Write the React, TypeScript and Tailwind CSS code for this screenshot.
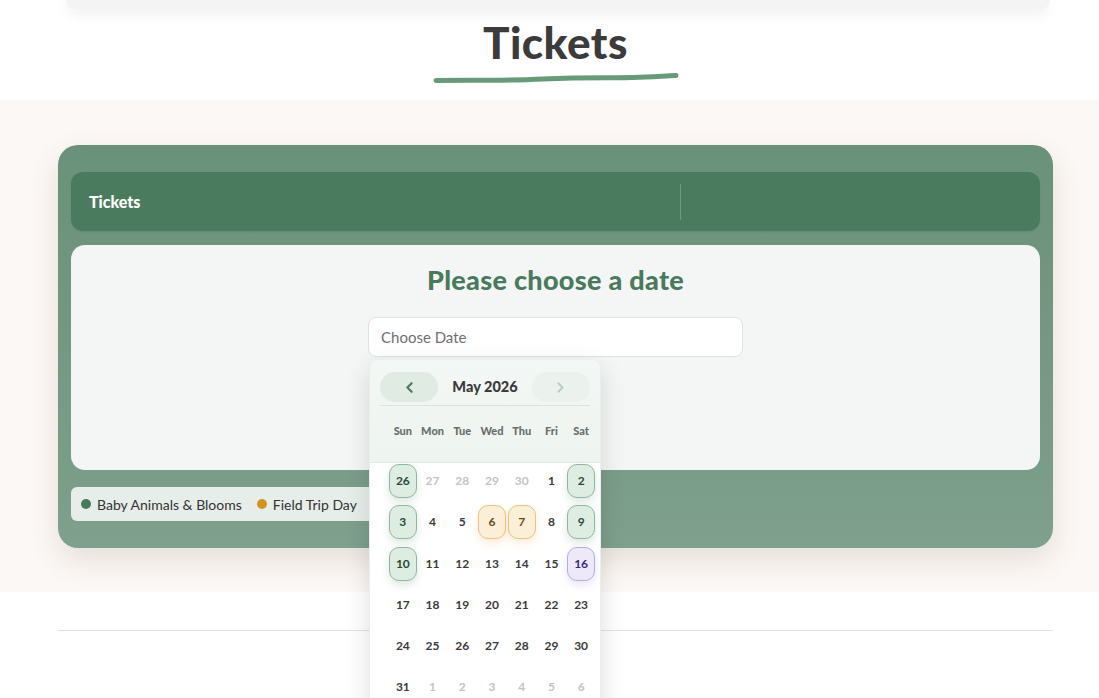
import React from "react";
import { ChevronLeft, ChevronRight } from "lucide-react";

type Cell = { d: number; muted?: boolean; kind?: "green" | "orange" | "purple" };

const rows: Cell[][] = [
  [{ d: 26, kind: "green" }, { d: 27, muted: true }, { d: 28, muted: true }, { d: 29, muted: true }, { d: 30, muted: true }, { d: 1 }, { d: 2, kind: "green" }],
  [{ d: 3, kind: "green" }, { d: 4 }, { d: 5 }, { d: 6, kind: "orange" }, { d: 7, kind: "orange" }, { d: 8 }, { d: 9, kind: "green" }],
  [{ d: 10, kind: "green" }, { d: 11 }, { d: 12 }, { d: 13 }, { d: 14 }, { d: 15 }, { d: 16, kind: "purple" }],
  [{ d: 17 }, { d: 18 }, { d: 19 }, { d: 20 }, { d: 21 }, { d: 22 }, { d: 23 }],
  [{ d: 24 }, { d: 25 }, { d: 26 }, { d: 27 }, { d: 28 }, { d: 29 }, { d: 30 }],
  [{ d: 31 }, { d: 1, muted: true }, { d: 2, muted: true }, { d: 3, muted: true }, { d: 4, muted: true }, { d: 5, muted: true }, { d: 6, muted: true }],
];

function DayCell({ c }: { c: Cell }) {
  let cls = "text-[#3a3a3a]";
  if (c.muted) cls = "text-[#c4c4c4]";
  if (c.kind === "green")
    cls = "bg-[#ddede2] border border-[#8db99b] text-[#2b4a36] shadow-[0_4px_8px_rgba(74,122,92,0.18)]";
  if (c.kind === "orange")
    cls = "bg-[#fcefd7] border border-[#eac27b] text-[#6a4810] shadow-[0_4px_8px_rgba(230,170,70,0.22)]";
  if (c.kind === "purple")
    cls = "bg-[#eee9f9] border border-[#b8a7e9] text-[#3a2a7c] shadow-[0_4px_8px_rgba(140,110,220,0.18)]";
  return (
    <div className="flex justify-center">
      <div className={`w-[28px] h-[34px] rounded-[10px] flex items-center justify-center text-[12px] font-bold ${cls}`}>
        {c.d}
      </div>
    </div>
  );
}

export default function App() {
  return (
    <div className="h-[698px] overflow-hidden bg-white" style={{ fontFamily: "Lato, 'Noto Sans', sans-serif" }}>
      {/* top nav edge */}
      <div className="pl-[66px] pr-[49px]">
        <div className="h-[10px] bg-[#f4f4f4] rounded-b-xl shadow-[0_4px_14px_rgba(0,0,0,0.07)]" />
      </div>

      {/* page title */}
      <div className="h-[90px] flex flex-col items-center pl-[58px] pr-[46px]">
        <h1 className="mt-[6px] text-[44px] leading-[52px] font-black text-[#3b3b3b] tracking-[0.5px]">Tickets</h1>
        <svg width="246" height="12" viewBox="0 0 246 12" className="mt-[4px]">
          <path
            d="M3 8.5 C 40 8, 70 9, 110 7 S 180 6, 200 5.5 S 230 4, 243 3.5"
            stroke="#689a7a"
            strokeWidth="5"
            strokeLinecap="round"
            fill="none"
          />
        </svg>
      </div>

      {/* cream section */}
      <div className="bg-[#fcf8f5] pt-[45px] pb-[44px] pl-[58px] pr-[46px]">
        <div className="rounded-[20px] bg-gradient-to-b from-[#6a917a] to-[#7ea08c] px-[13px] pt-[27px] pb-[27px] shadow-[0_12px_30px_rgba(90,70,50,0.14)]">
          {/* header bar */}
          <div className="h-[59px] rounded-[12px] bg-[#4b7b5e] flex items-center shadow-[0_1px_2px_rgba(0,0,0,0.08)]">
            <div className="w-[610px] flex items-center pl-[18px] border-r border-[rgba(255,255,255,0.22)] h-[36px]">
              <span className="text-white font-black text-[16px]">Tickets</span>
            </div>
          </div>

          {/* panel */}
          <div className="mt-[14px] h-[225px] rounded-[14px] bg-[#f4f6f5] flex flex-col items-center">
            <h2 className="mt-[17px] text-[27px] leading-[36px] font-black text-[#4a7a5c] tracking-[0.3px]">Please choose a date</h2>
            <div className="relative mt-[19px]">
              <div className="w-[375px] h-[40px] rounded-[8px] bg-white border border-[#dbe4df] flex items-center px-[12px]">
                <span className="text-[15px] text-[#6f6f6f]">Choose Date</span>
              </div>

              {/* calendar popup */}
              <div className="absolute z-10 left-[1px] top-[42px] w-[232px] h-[360px] bg-white rounded-t-[10px] border border-[#e9efeb] shadow-[0_8px_26px_rgba(0,0,0,0.13)] overflow-hidden">
                <div className="bg-gradient-to-b from-[#f3f7f5] to-[#eef4f0] border-b border-[#e2eae5] px-[10px] pt-[12px] h-[103px]">
                  <div className="flex items-center justify-between">
                    <button className="w-[58px] h-[30px] rounded-full bg-[#e0ebe4] flex items-center justify-center">
                      <ChevronLeft size={17} strokeWidth={3} color="#4a7a5c" />
                    </button>
                    <span className="text-[14.5px] font-black text-[#3a3a3a]">May 2026</span>
                    <button className="w-[58px] h-[30px] rounded-full bg-[#ebf1ed] flex items-center justify-center">
                      <ChevronRight size={17} strokeWidth={2.5} color="#b9ccc0" />
                    </button>
                  </div>
                  <div className="mt-[3px] h-px bg-[#dce2e8]" />
                  <div className="grid grid-cols-7 w-[208px] ml-[8px] mt-[17px]">
                    {["Sun", "Mon", "Tue", "Wed", "Thu", "Fri", "Sat"].map((n) => (
                      <div key={n} className="text-center text-[11px] font-black text-[#676f6b]">
                        {n}
                      </div>
                    ))}
                  </div>
                </div>
                <div className="grid grid-cols-7 w-[208px] ml-[18px] pt-[1px] gap-y-[7.3px]">
                  {rows.flat().map((c, i) => (
                    <DayCell key={i} c={c} />
                  ))}
                </div>
              </div>
            </div>
          </div>

          {/* legend */}
          <div className="mt-[17px] inline-flex items-center h-[34px] rounded-[6px] bg-[#e7eeea] pl-[10px] pr-[20px] gap-[15px]">
            <div className="flex items-center gap-[6px]">
              <span className="w-[10px] h-[10px] rounded-full bg-[#4a7a5c]" />
              <span className="text-[14px] text-[#333]">Baby Animals &amp; Blooms</span>
            </div>
            <div className="flex items-center gap-[6px]">
              <span className="w-[10px] h-[10px] rounded-full bg-[#d4921f]" />
              <span className="text-[14px] text-[#333]">Field Trip Day</span>
            </div>
          </div>
        </div>
      </div>

      {/* footer divider */}
      <div className="pl-[58px] pr-[46px] pt-[38px]">
        <div className="h-px bg-[#e0e0e0]" />
      </div>
    </div>
  );
}
